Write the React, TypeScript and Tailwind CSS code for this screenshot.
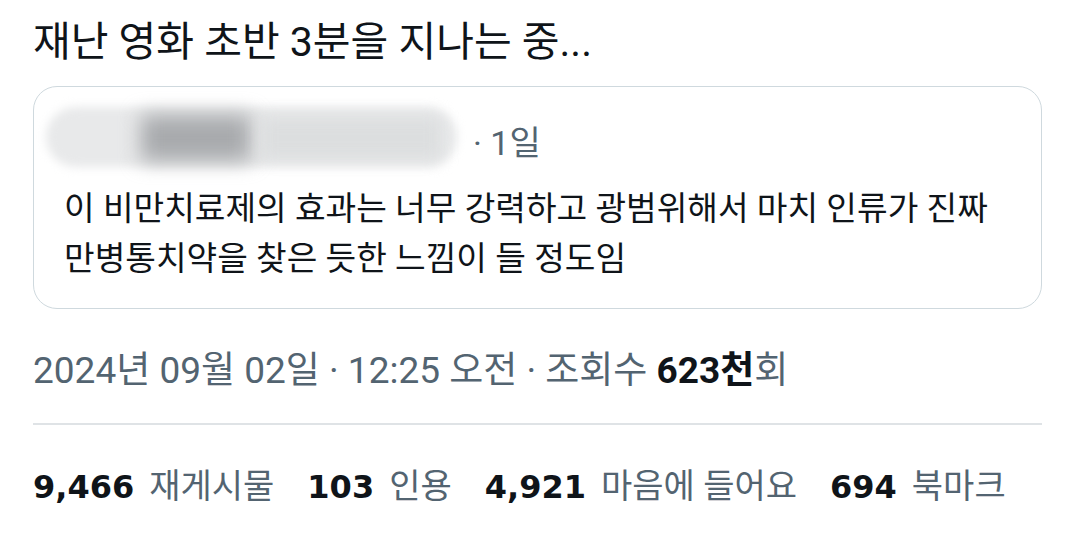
const font = {
  fontFamily: '"Roboto", "Noto Sans CJK KR", sans-serif',
};

const numFont = {
  fontFamily: '"DejaVu Sans", "Noto Sans CJK KR", sans-serif',
};

function Stat({ value, label }: { value: string; label: string }) {
  return (
    <span className="flex items-baseline gap-[15px]">
      <span className="font-bold text-[32px] text-[#0f1419]" style={numFont}>
        {value}
      </span>
      <span className="text-[#536471]">{label}</span>
    </span>
  );
}

export default function App() {
  return (
    <div className="w-[1073px] h-[534px] bg-white overflow-hidden" style={font}>
      <div className="pl-[33px] pr-[31px] pt-[14px]">
        <h1 className="text-[41px] leading-[56px] text-[#0f1419]">
          재난 영화 초반 3분을 지나는 중...
        </h1>

        {/* Quoted post */}
        <div className="mt-[16px] h-[223px] rounded-[24px] border border-[#cfd9de] px-[30px] pt-[14px]">
          <div className="flex items-center h-[74px]">
            <div className="relative w-[425px] h-[74px] -ml-[18px]">
              <div className="absolute top-[6px] bottom-[8px] left-0 right-[14px] rounded-full bg-[#e8e9ea] blur-[5px]" />
              <div className="absolute top-[14px] bottom-[14px] left-[95px] w-[110px] bg-[#a8aaad] blur-[10px]" />
              <div className="absolute top-[16px] bottom-[16px] left-[215px] w-[180px] bg-[#dcdedf] blur-[8px]" />
            </div>
            <span className="ml-[2px] mt-[10px] text-[34px] text-[#536471]">
              · 1일
            </span>
          </div>
          <p className="mt-[9px] text-[33.3px] leading-[50px] text-[#0f1419]">
            이 비만치료제의 효과는 너무 강력하고 광범위해서 마치 인류가 진짜
            <br />
            만병통치약을 찾은 듯한 느낌이 들 정도임
          </p>
        </div>

        {/* Time & views */}
        <div className="mt-[38px] text-[37px] leading-[48px] text-[#536471]">
          2024년 09월 02일 · 12:25 오전 · 조회수{" "}
          <span className="font-bold text-[#0f1419]">623천</span>회
        </div>

        <div className="mt-[28px] border-t-2 border-[#dfe3e6]" />

        {/* Engagement */}
        <div className="mt-[37px] flex items-baseline gap-[33px] text-[34px] leading-[48px]">
          <Stat value="9,466" label="재게시물" />
          <Stat value="103" label="인용" />
          <Stat value="4,921" label="마음에 들어요" />
          <Stat value="694" label="북마크" />
        </div>
      </div>
    </div>
  );
}
